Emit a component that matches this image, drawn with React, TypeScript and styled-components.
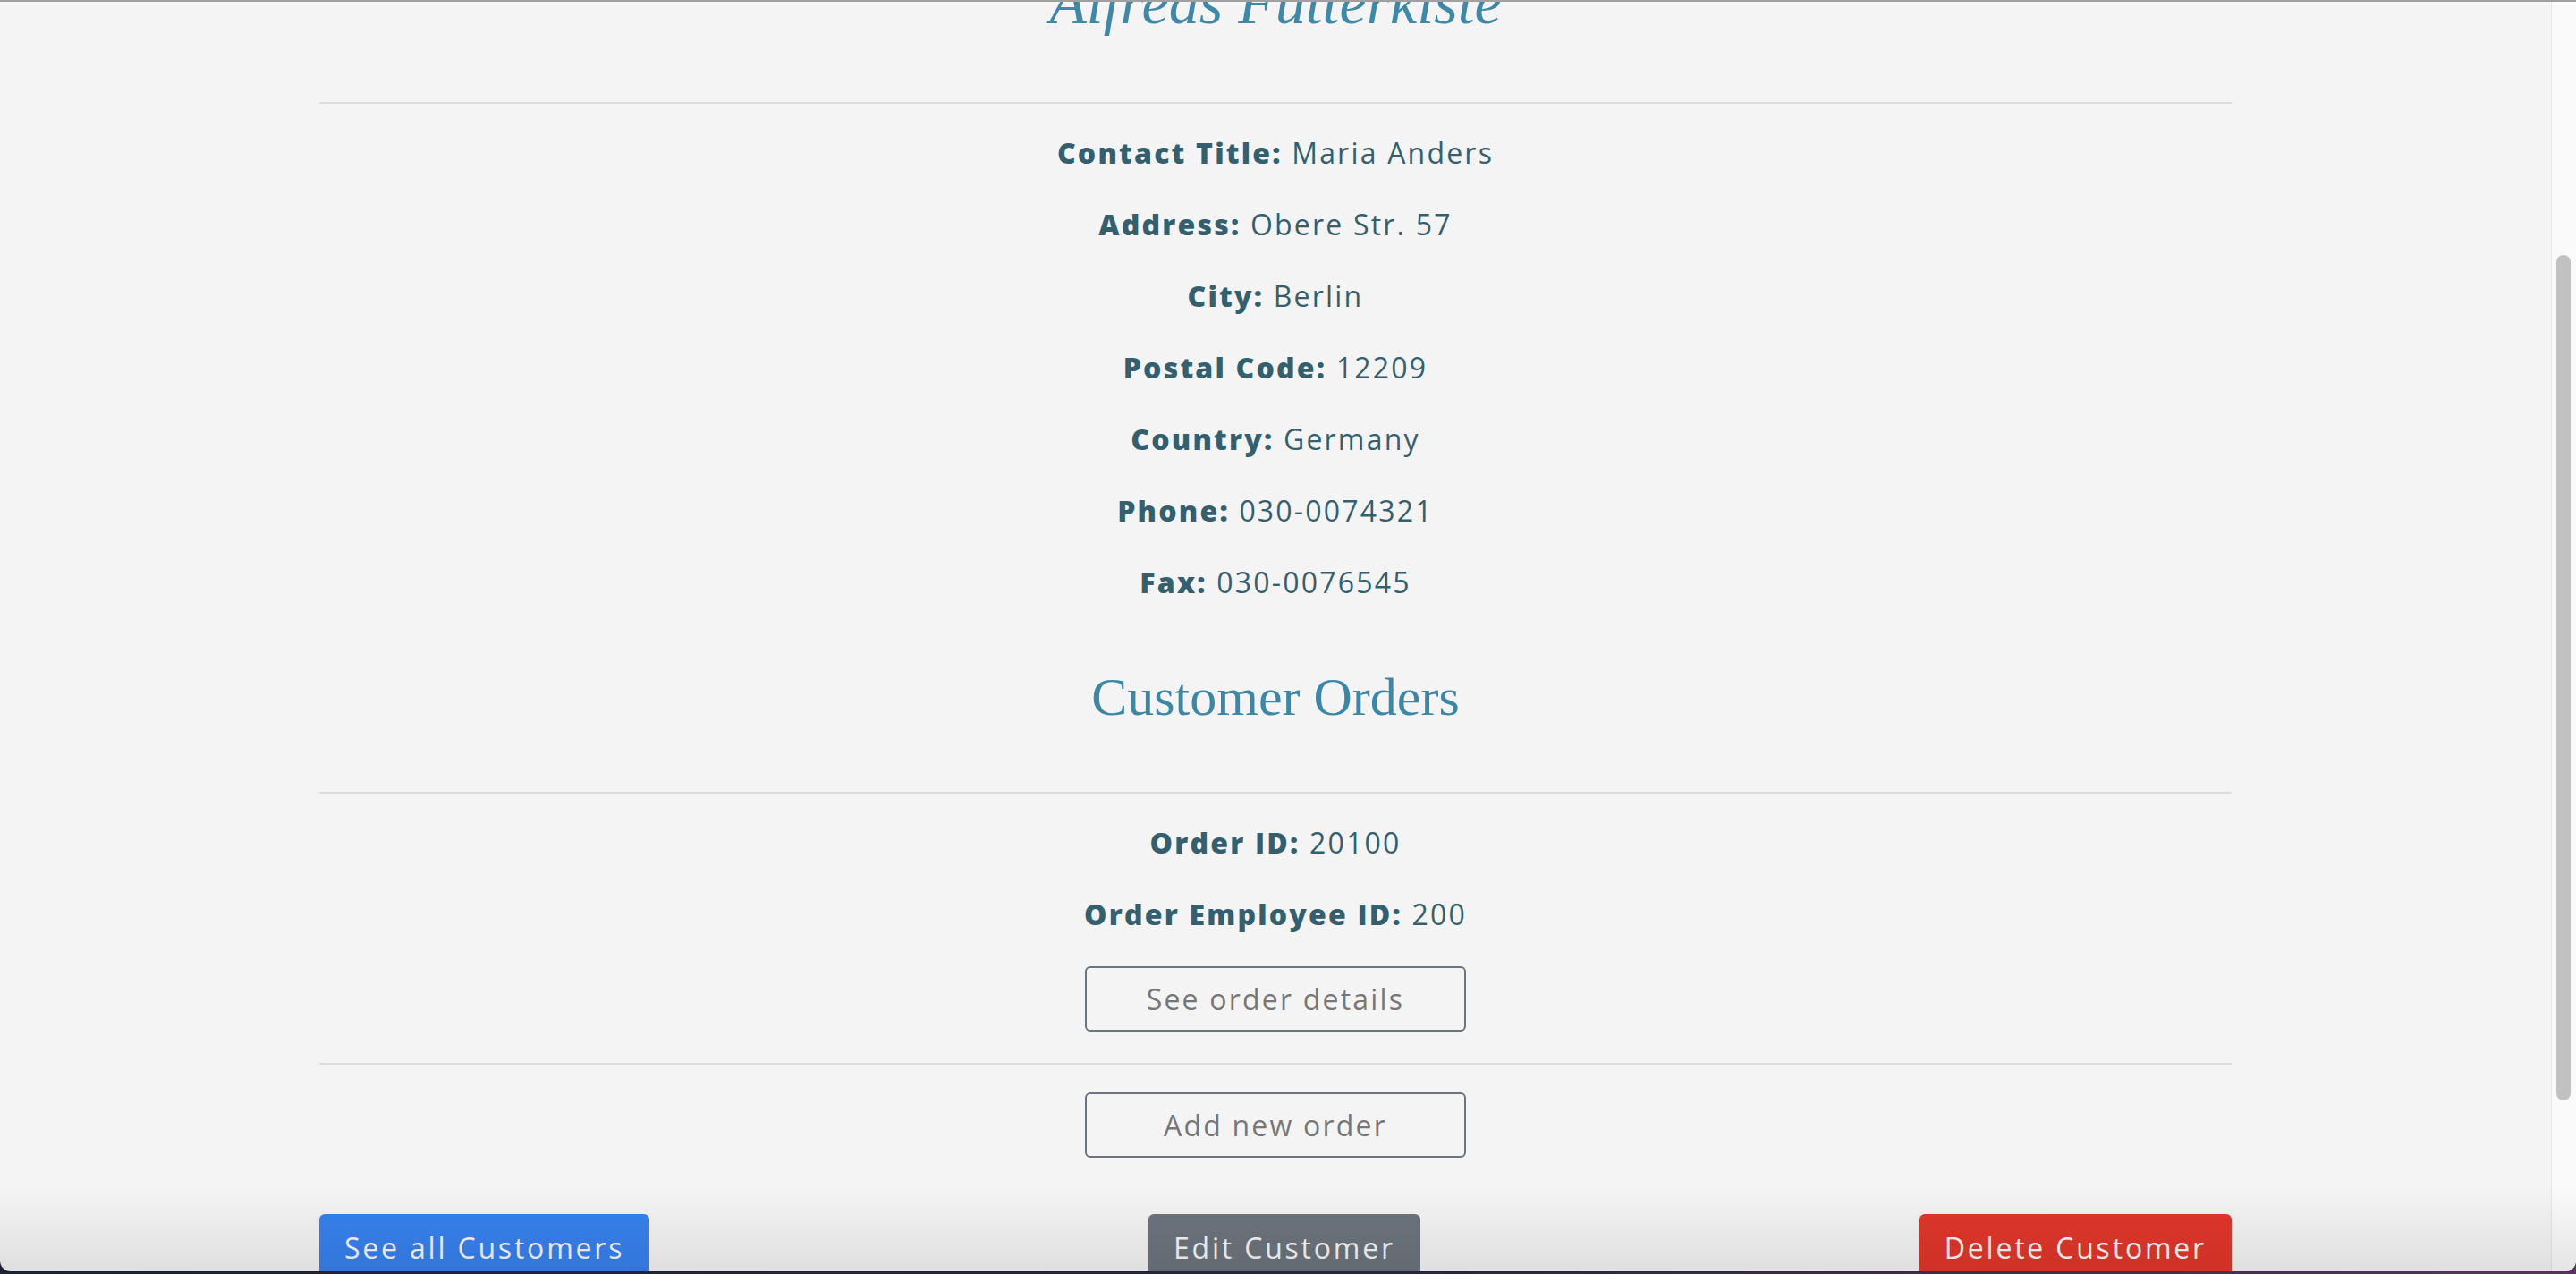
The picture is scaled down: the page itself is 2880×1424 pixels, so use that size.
import { useLayoutEffect, useRef, useState } from 'react';
import styled, { createGlobalStyle } from 'styled-components';

const GlobalStyle = createGlobalStyle`
  * {
    box-sizing: border-box;
  }
  html,
  body {
    margin: 0;
    height: 100%;
    overflow: hidden;
  }
  body {
    background: linear-gradient(90deg, #1c2233 0%, #262640 55%, #5c3060 100%);
    font-family: 'Open Sans', 'Liberation Sans', sans-serif;
  }
`;

const Window = styled.div`
  position: relative;
  display: flex;
  height: calc(100vh - 3px);
  border-top: 2px solid #a0a0a0;
  border-radius: 0 0 12px 12px;
  background: #f4f4f4;
  overflow: hidden;

  &::after {
    content: '';
    position: absolute;
    left: 0;
    right: 0;
    bottom: 0;
    height: 96px;
    background: linear-gradient(to bottom, rgba(0, 0, 0, 0), rgba(0, 0, 0, 0.085));
    pointer-events: none;
  }
`;

const ScrollArea = styled.div`
  flex: 1;
  height: 100%;
  overflow: hidden;
`;

const ScrollTrack = styled.div`
  flex: none;
  width: 28px;
  height: 100%;
  padding: 0 6px 0 5px;
  background: #fafafa;
  border-left: 1px solid #e6e6e6;
`;

const ScrollThumb = styled.div`
  width: 16px;
  border-radius: 8px;
  background: #c1c1c1;
`;

const Page = styled.main`
  width: 2138px;
  margin: 0 auto;
  padding: 386px 0 277px;
  display: flex;
  flex-direction: column;
  color: #345f6e;
`;

const Title = styled.h1`
  margin: 0;
  font-family: 'Liberation Serif', serif;
  font-style: italic;
  font-weight: 400;
  font-size: 68px;
  line-height: 80px;
  text-align: center;
  color: #3e89a7;
`;

const SectionTitle = styled.h2`
  margin: 69px 0 0;
  font-family: 'Liberation Serif', serif;
  font-weight: 400;
  font-size: 60px;
  line-height: 70px;
  text-align: center;
  color: #3d87a6;
`;

const Divider = styled.hr<{ $top: number }>`
  margin: ${props => props.$top}px 0 0;
  border: 0;
  height: 2px;
  background: #dcdcdc;
`;

const DetailList = styled.div`
  display: flex;
  flex-direction: column;
  align-items: center;
  gap: 32px;
  padding-top: 31px;
`;

const Detail = styled.p`
  margin: 0;
  font-size: 32px;
  line-height: 48px;
  letter-spacing: 2.2px;
  text-align: center;

  strong {
    font-weight: 800;
  }
`;

const OutlineButton = styled.button<{ $top: number }>`
  align-self: center;
  margin-top: ${props => props.$top}px;
  width: 426px;
  height: 73px;
  border: 2px solid #6c757d;
  border-radius: 6px;
  background: transparent;
  color: #777;
  font-family: inherit;
  font-size: 32px;
  letter-spacing: 2.2px;
  cursor: pointer;
`;

const ActionRow = styled.div`
  display: flex;
  justify-content: space-between;
  margin-top: 63px;
`;

const colors = {
  primary: '#3781ee',
  secondary: '#6c747d',
  danger: '#e2362b'
};

const ActionButton = styled.button<{ $variant: keyof typeof colors }>`
  height: 74px;
  padding: 0 28px;
  border: 0;
  border-radius: 6px;
  background: ${props => colors[props.$variant]};
  color: #f6f6f6;
  font-family: inherit;
  font-size: 32px;
  letter-spacing: 2.8px;
  cursor: pointer;
`;

const customer = [
  ['Contact Title', 'Maria Anders'],
  ['Address', 'Obere Str. 57'],
  ['City', 'Berlin'],
  ['Postal Code', '12209'],
  ['Country', 'Germany'],
  ['Phone', '030-0074321'],
  ['Fax', '030-0076545']
];

const order = [
  ['Order ID', '20100'],
  ['Order Employee ID', '200']
];

const SCROLL_TOP = 425;

const App = () => {
  const scrollRef = useRef<HTMLDivElement>(null);
  const [thumb, setThumb] = useState({ top: 283, height: 945 });

  useLayoutEffect(() => {
    const el = scrollRef.current;
    if (!el) return;
    el.scrollTop = SCROLL_TOP;
    const ratio = el.clientHeight / el.scrollHeight;
    setThumb({
      top: Math.round(el.scrollTop * ratio),
      height: Math.round(el.clientHeight * ratio)
    });
  }, []);

  return (
    <>
      <GlobalStyle />
      <Window>
        <ScrollArea ref={scrollRef}>
          <Page>
            <Title>Alfreds Futterkiste</Title>
            <Divider $top={71} />
            <DetailList>
              {customer.map(([label, value]) => (
                <Detail key={label}>
                  <strong>{label}:</strong> {value}
                </Detail>
              ))}
            </DetailList>

            <SectionTitle>Customer Orders</SectionTitle>
            <Divider $top={71} />
            <DetailList>
              {order.map(([label, value]) => (
                <Detail key={label}>
                  <strong>{label}:</strong> {value}
                </Detail>
              ))}
            </DetailList>
            <OutlineButton $top={34}>See order details</OutlineButton>
            <Divider $top={35} />
            <OutlineButton $top={31}>Add new order</OutlineButton>

            <ActionRow>
              <ActionButton $variant="primary">See all Customers</ActionButton>
              <ActionButton $variant="secondary">Edit Customer</ActionButton>
              <ActionButton $variant="danger">Delete Customer</ActionButton>
            </ActionRow>
          </Page>
        </ScrollArea>
        <ScrollTrack>
          <ScrollThumb style={{ marginTop: thumb.top, height: thumb.height }} />
        </ScrollTrack>
      </Window>
    </>
  );
};

export default App;
